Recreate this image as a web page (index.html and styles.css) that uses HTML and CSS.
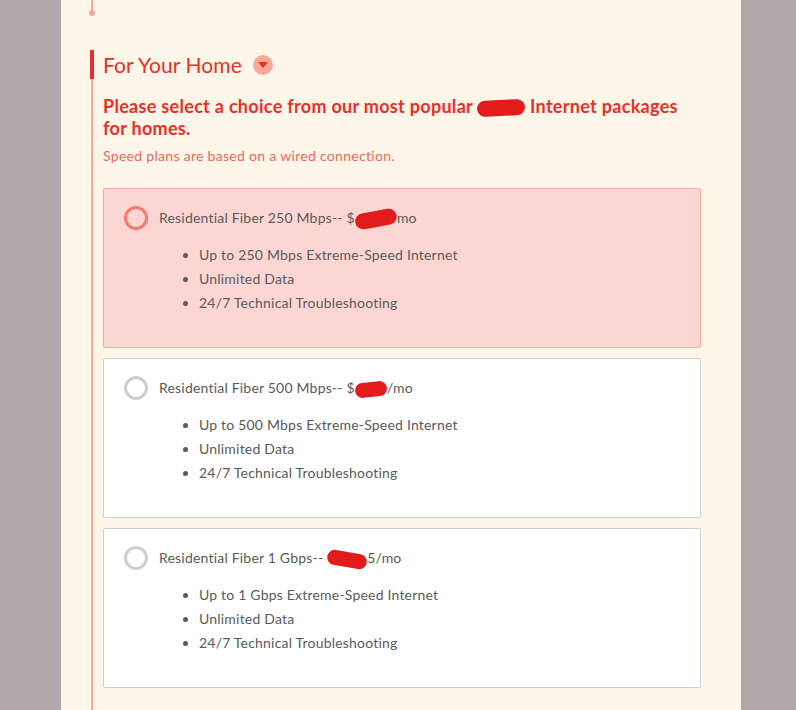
FILE: index.html
```html
<!DOCTYPE html>
<html>
<head>
<meta charset="utf-8">
<link rel="stylesheet" href="styles.css">
</head>
<body>
<div class="panel">
  <div class="stub"></div>
  <section class="step">
    <h2 class="step-title">For Your Home <span class="toggle"><svg width="10" height="6" viewBox="0 0 10 6"><path d="M0 0H10L5 6Z" fill="#e8302a"/></svg></span></h2>
    <p class="lead">Please select a choice from our most popular <span class="redact redact-lead"></span> Internet packages for homes.</p>
    <p class="note">Speed plans are based on a wired connection.</p>

    <div class="plans">
      <label class="plan selected">
        <span class="radio"></span>
        <div class="plan-body">
          <div class="plan-name">Residential Fiber 250 Mbps-- $<span class="redact r1"></span>mo</div>
          <ul class="features">
            <li>Up to 250 Mbps Extreme-Speed Internet</li>
            <li>Unlimited Data</li>
            <li>24/7 Technical Troubleshooting</li>
          </ul>
        </div>
      </label>
      <label class="plan">
        <span class="radio"></span>
        <div class="plan-body">
          <div class="plan-name">Residential Fiber 500 Mbps-- $<span class="redact r2"></span>/mo</div>
          <ul class="features">
            <li>Up to 500 Mbps Extreme-Speed Internet</li>
            <li>Unlimited Data</li>
            <li>24/7 Technical Troubleshooting</li>
          </ul>
        </div>
      </label>
      <label class="plan">
        <span class="radio"></span>
        <div class="plan-body">
          <div class="plan-name">Residential Fiber 1 Gbps-- <span class="redact r3"></span>5/mo</div>
          <ul class="features">
            <li>Up to 1 Gbps Extreme-Speed Internet</li>
            <li>Unlimited Data</li>
            <li>24/7 Technical Troubleshooting</li>
          </ul>
        </div>
      </label>
    </div>
  </section>
</div>
</body>
</html>
```

FILE: styles.css
```css
html, body {
  margin: 0;
  padding: 0;
  background: #b1a9a9;
  font-family: Lato, "Open Sans", sans-serif;
}

.panel {
  margin-left: 61px;
  width: 680px;
  min-height: 710px;
  background: #fff6ea;
  padding-right: 40px;
  box-sizing: border-box;
  overflow: hidden;
}

.stub {
  position: relative;
  margin-left: 30px;
  width: 2px;
  height: 13px;
  background: #f7a99b;
}
.stub::after {
  content: "";
  position: absolute;
  left: -2px;
  bottom: -3px;
  width: 6px;
  height: 6px;
  border-radius: 50%;
  background: #f7a99b;
}

.step {
  margin-top: 37px;
  margin-left: 30px;
  border-left: 2px solid #f7a99b;
  padding-left: 10px;
  padding-bottom: 40px;
}

.step-title {
  margin: 0 0 0 -13px;
  border-left: 4px solid #e8302a;
  padding-left: 9px;
  height: 29px;
  line-height: 29px;
  font-size: 21px;
  font-weight: 400;
  letter-spacing: 0.1px;
  color: #e8302a;
  display: flex;
  align-items: center;
}

.toggle {
  display: inline-flex;
  align-items: center;
  justify-content: center;
  width: 20px;
  height: 20px;
  border-radius: 50%;
  background: #f9a897;
  margin-left: 11px;
  margin-top: 1px;
}

.lead {
  margin: 16px 0 0;
  font-size: 18px;
  line-height: 22px;
  font-weight: 700;
  letter-spacing: 0.3px;
  color: #e8302a;
}

.note {
  margin: 8px 0 0;
  font-size: 14px;
  line-height: 18px;
  letter-spacing: 0.3px;
  color: #f0665f;
}

.redact {
  display: inline-block;
  background: #e31b1b;
  border-radius: 10px;
  vertical-align: middle;
}
.redact-lead {
  width: 48px;
  height: 16px;
  transform: rotate(-3deg);
}
.r1 { width: 42px; height: 16px; transform: rotate(-10deg); }
.r2 { width: 32px; height: 15px; transform: rotate(-6deg); }
.r3 { width: 40px; height: 15px; transform: rotate(10deg); }

.plans {
  margin-top: 23px;
  display: flex;
  flex-direction: column;
  gap: 10px;
}

.plan {
  display: flex;
  align-items: flex-start;
  gap: 11px;
  min-height: 160px;
  box-sizing: border-box;
  padding: 17px 20px 31px;
  background: #fff;
  border: 1px solid #cfcfcf;
  border-radius: 2px;
  cursor: pointer;
}
.plan.selected {
  background: #fcd6d3;
  border-color: #f8aaa2;
}

.radio {
  flex: none;
  width: 24px;
  height: 24px;
  box-sizing: border-box;
  border: 3px solid #cfcfcf;
  border-radius: 50%;
}
.plan.selected .radio {
  border-color: #f47b6f;
}

.plan-body {
  color: #5a5a5a;
  font-size: 14px;
  letter-spacing: 0.2px;
}

.plan-name {
  line-height: 24px;
}

.features {
  margin: 13px 0 0;
  padding-left: 40px;
}
.features li {
  line-height: 24px;
}
```
